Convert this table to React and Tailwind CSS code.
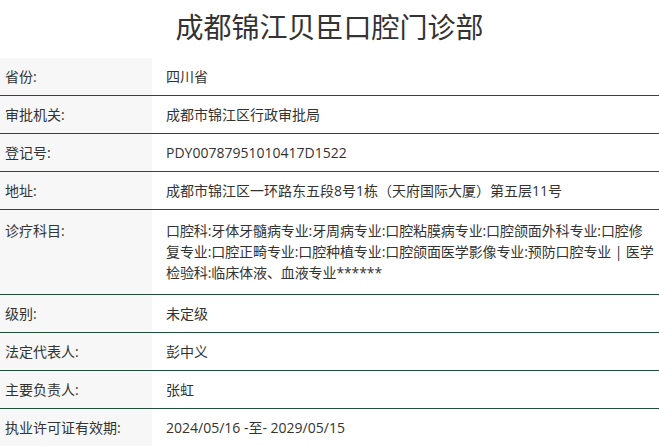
const rows = [
  ["省份:", "四川省"],
  ["审批机关:", "成都市锦江区行政审批局"],
  ["登记号:", "PDY00787951010417D1522"],
  ["地址:", "成都市锦江区一环路东五段8号1栋（天府国际大厦）第五层11号"],
  ["诊疗科目:", null],
  ["级别:", "未定级"],
  ["法定代表人:", "彭中义"],
  ["主要负责人:", "张虹"],
  ["执业许可证有效期:", "2024/05/16 -至- 2029/05/15"],
];

export default function App() {
  return (
    <div className="w-[659px] h-[447px] overflow-hidden bg-white text-[#333]" style={{ fontFamily: '"Open Sans", "Noto Sans CJK SC", sans-serif' }}>
      <h1 className="h-[58px] pt-[7px] text-center text-[28px] leading-[40px] font-normal text-[#333]">成都锦江贝臣口腔门诊部</h1>
      <div className="flex flex-col">
        {rows.map(([k, v], i) => (
          <div key={i} className={`flex text-[14px] leading-[21px] ${i > 0 ? "border-t border-[#1f4f3a]" : ""}`}>
            <div className={`w-[152px] shrink-0 bg-[#f7f7f7] pl-[5px] ${v === null ? "pt-[10px] pb-[11px]" : "py-[8px]"}`}>{k}</div>
            {v === null ? (
              <div className="flex-1 min-w-0 pl-[14px] pt-[10px] pb-[11px] bg-white whitespace-nowrap tracking-[-0.1px]">
                口腔科:牙体牙髓病专业:牙周病专业:口腔粘膜病专业:口腔颌面外科专业:口腔修<br />
                复专业:口腔正畸专业:口腔种植专业:口腔颌面医学影像专业:预防口腔专业 | 医学<br />
                检验科:临床体液、血液专业******
              </div>
            ) : (
              <div className="flex-1 pl-[14px] pr-[6px] py-[8px] bg-white">{v}</div>
            )}
          </div>
        ))}
      </div>
    </div>
  );
}
